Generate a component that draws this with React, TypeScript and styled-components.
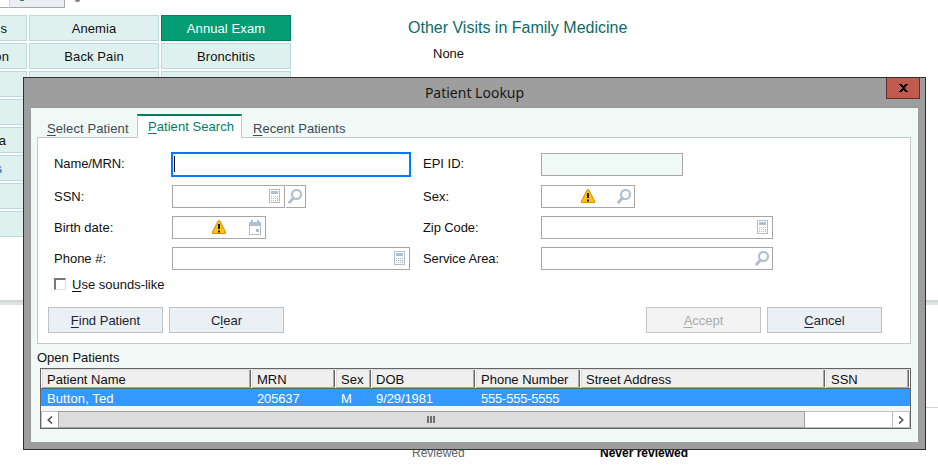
import React from "react";
import styled, { createGlobalStyle } from "styled-components";

const GlobalStyle = createGlobalStyle`
  * { box-sizing: border-box; }
  body {
    margin: 0;
    background: #fff;
    overflow: hidden;
    font: 13px/16px "Liberation Sans", Arial, sans-serif;
    color: #101010;
  }
`;

const Page = styled.div`
  position: relative;
  width: 938px;
  height: 470px;
  overflow: hidden;
  background: #fff;
`;

const Strip = styled.div`
  display: flex;
  align-items: flex-start;
  height: 15px;
`;
const StripInput = styled.div`
  width: 9px;
  height: 8px;
  border-bottom: 1px solid #a8a8a8;
`;
const StripButton = styled.div`
  width: 56px;
  height: 8px;
  padding-left: 10px;
  background: #ebeff3;
  border: solid #a8a8a8;
  border-width: 0 1px 1px 0;
  border-left: 1px solid #d4d8da;
`;
const GreenMark = styled.div`
  width: 4px;
  height: 1px;
  background: #2c8a62;
`;
const Knob = styled.div`
  width: 5px;
  height: 2px;
  margin-left: 10px;
  background: #74859a;
  border-radius: 0 0 2px 2px;
`;

const Upper = styled.div`
  display: flex;
  height: 285px;
`;
const Tiles = styled.div`
  display: grid;
  grid-template-columns: 27px 130px 130px;
  grid-auto-rows: 26px;
  gap: 2px;
  align-content: start;
  width: 291px;
`;
const Tile = styled.div<{ $selected?: boolean; $cut?: number; $blue?: boolean }>`
  display: flex;
  justify-content: ${(p) => (p.$cut === undefined ? "center" : "flex-end")};
  padding: 5px ${(p) => p.$cut ?? 0}px 0 0;
  overflow: hidden;
  border: 1px solid ${(p) => (p.$selected ? "#048060" : "#bcd9dc")};
  border-left-width: ${(p) => (p.$cut === undefined ? 1 : 0)}px;
  background: ${(p) => (p.$selected ? "#059d75" : "#dff1ee")};
  color: ${(p) => (p.$selected ? "#fff" : p.$blue ? "#1560b8" : "#101010")};
  letter-spacing: 0.1px;
`;
const Visits = styled.section`
  margin-left: 117px;
  padding-top: 3px;
`;
const VisitsTitle = styled.h2`
  margin: 0;
  font-weight: 400;
  font-size: 16px;
  line-height: 20px;
  color: #0c6b66;
`;
const VisitsNone = styled.div`
  margin: 8px 0 0 25px;
`;
const Divider = styled.div`
  height: 5px;
  background: #dee3e1;
  border-top: 2px solid #ced7d4;
`;
const Reviews = styled.div`
  display: flex;
  height: 58px;
  margin-top: 102px;
  border-top: 1px solid #d2d2d2;
  margin-left: 412px;
`;
const ReviewCell = styled.div<{ $w: number; $bold?: boolean }>`
  width: ${(p) => p.$w}px;
  height: 50px;
  padding-top: 37px;
  overflow: hidden;
  font-size: 12px;
  color: ${(p) => (p.$bold ? "#000" : "#606468")};
  font-weight: ${(p) => (p.$bold ? 700 : 400)};
`;

const Dialog = styled.div`
  position: absolute;
  left: 23px;
  top: 77px;
  width: 903px;
  height: 373px;
  border: 1px solid #303030;
  background: #9e9e9e;
  padding: 0 7px 7px;
`;
const TitleBar = styled.header`
  display: flex;
  justify-content: space-between;
  align-items: flex-start;
  height: 29px;
  margin-right: -2px;
`;
const Title = styled.h1`
  flex: 1;
  margin: 0;
  padding: 5px 0 0 32px;
  text-align: center;
  font: 400 14px/20px "Noto Sans", "Open Sans", sans-serif;
  color: #181818;
`;
const Close = styled.button`
  display: flex;
  align-items: flex-start;
  justify-content: center;
  width: 34px;
  height: 21px;
  padding: 6px 0 0 1px;
  border: 1px solid #5f2f2b;
  border-top: 0;
  background: #c25a50;
`;
const Client = styled.div`
  height: 335px;
  border-top: 1px solid #9098a4;
  background: #f0f9f6;
  padding: 6px 7px 0 6px;
`;
const Tabs = styled.nav`
  display: flex;
  height: 24px;
  margin-bottom: -1px;
  position: relative;
`;
const Tab = styled.div<{ $active?: boolean; $w: number; $inset: number; $space: number }>`
  width: ${(p) => p.$w}px;
  height: 24px;
  padding: ${(p) => (p.$active ? 3 : 5)}px 0 0 ${(p) => p.$inset}px;
  border-top: 2px solid ${(p) => (p.$active ? "#008060" : "transparent")};
  border-left: 1px solid ${(p) => (p.$active ? "#c6c8c8" : "transparent")};
  border-right: 1px solid ${(p) => (p.$active ? "#c6c8c8" : "transparent")};
  background: ${(p) => (p.$active ? "#fff" : "transparent")};
  color: ${(p) => (p.$active ? "#008060" : "#3e4a58")};
  letter-spacing: ${(p) => p.$space}px;
  white-space: nowrap;
`;
const Panel = styled.div`
  height: 207px;
  padding: 15px 0 0 16px;
  border: 1px solid #c6c8c8;
  background: #fff;
`;
const Form = styled.div`
  display: grid;
  grid-template-columns: 369px 369px;
  grid-template-rows: 32px 31px 31px 23px;
`;
const FormRow = styled.div`
  display: flex;
  height: 23px;
`;
const Label = styled.label<{ $first?: boolean; $space?: number }>`
  width: 118px;
  padding-top: ${(p) => (p.$first ? 3 : 4)}px;
  letter-spacing: ${(p) => p.$space ?? 0}px;
`;
const Field = styled.div<{ $w: number; $readonly?: boolean }>`
  display: flex;
  align-items: flex-start;
  justify-content: flex-end;
  width: ${(p) => p.$w}px;
  height: 23px;
  padding: 3px 3px 0 0;
  border: 1px solid #a6a6a6;
  background: ${(p) => (p.$readonly ? "#eff9f6" : "#fff")};
`;
const FocusedField = styled.div`
  width: 240px;
  height: 25px;
  margin: -1px;
  padding: 2px 0 0 1px;
  border: 2px solid #007bff;
  background: #fff;
`;
const Caret = styled.div`
  width: 1px;
  height: 16px;
  background: #000;
`;
const LookupButton = styled.button`
  width: 20px;
  height: 23px;
  margin-left: 1px;
  padding: 3px 0 0 2px;
  border: 1px solid #a6a6a6;
  border-left: 0;
  background: #fff;
  display: flex;
`;
const IconSlot = styled.span<{ $after: number }>`
  display: flex;
  margin-right: ${(p) => p.$after}px;
`;
const CheckRow = styled.label`
  display: flex;
  gap: 6px;
  height: 16px;
  margin-top: 7px;
`;
const Box = styled.span`
  width: 12px;
  height: 12px;
  margin-top: 1px;
  border: 1px solid #e0e0e0;
  border-top: 2px solid #787878;
  border-left: 2px solid #787878;
  background: #fff;
`;
const Buttons = styled.div`
  display: flex;
  gap: 6px;
  margin: 14px 0 0 -6px;
`;
const Button = styled.button<{ $push?: boolean }>`
  width: 115px;
  height: 26px;
  margin-left: ${(p) => (p.$push ? 356 : 0)}px;
  padding: 2px 0 0;
  border: 1px solid #bcc3c8;
  background: #ebf0f4;
  color: #202430;
  font: inherit;
  &:disabled {
    color: #a9a9a9;
    background: #f3f3f3;
    border-color: #c6c6c6;
  }
`;
const Key = styled.span`
  text-decoration: underline;
  text-decoration-thickness: 1px;
  text-underline-offset: 2px;
`;

const ListTitle = styled.div`
  height: 24px;
  padding-top: 6px;
  color: #101010;
`;
const Table = styled.div`
  width: 871px;
  height: 61px;
  margin-left: 3px;
  border: 1px solid #646464;
  background: #f4f6f7;
`;
const Cols = styled.div<{ $selected?: boolean }>`
  display: grid;
  grid-template-columns: 210px 84px 36px 104px 105px 245px 84px 1px;
  grid-template-rows: 100%;
  height: ${(p) => (p.$selected ? 17 : 20)}px;
  background: ${(p) => (p.$selected ? "#3399ff" : "#fff")};
  border-bottom: ${(p) => (p.$selected ? 0 : 1)}px solid #646464;
  color: ${(p) => (p.$selected ? "#fff" : "#101010")};
`;
const Head = styled.div<{ $pad: number }>`
  margin-left: 1px;
  padding: 0 0 0 ${(p) => p.$pad - 2}px;
  border: solid #dcdcdc;
  border-width: 1px 0 0 1px;
  border-bottom: 1px solid #a8a8a8;
  background: #efefef;
  box-shadow: inset -1px 0 #666, inset -2px 0 #aaa;
  line-height: 19px;
  white-space: nowrap;
`;
const Cell = styled.div<{ $pad: number; $space: number }>`
  padding-left: ${(p) => p.$pad}px;
  line-height: 19px;
  letter-spacing: ${(p) => p.$space}px;
  white-space: nowrap;
`;
const Scroll = styled.div`
  display: flex;
  height: 17px;
  margin-top: 5px;
  border: 1px solid #c2c2c2;
  background: #fff;
`;
const Arrow = styled.div<{ $right?: boolean }>`
  display: flex;
  align-items: center;
  justify-content: center;
  width: 17px;
  padding-right: ${(p) => (p.$right ? 0 : 2)}px;
  border-left: ${(p) => (p.$right ? "1px solid #bdbdbd" : "0")};
`;
const Thumb = styled.div`
  display: flex;
  align-items: center;
  justify-content: center;
  gap: 1px;
  width: 747px;
  height: 17px;
  margin: -1px auto 0 -1px;
  padding-right: 1px;
  border: 1px solid #a0a0a0;
  background: #dcdcdc;
`;
const Grip = styled.span`
  width: 2px;
  height: 7px;
  background: #707070;
`;

const SearchIcon = () => (
  <svg width="14" height="15" viewBox="0 0 14 15">
    <circle cx="8.5" cy="5.5" r="4.5" fill="none" stroke="#b0bfcc" strokeWidth="2.1" />
    <path d="M5.2 9.3L1.6 13.2" stroke="#b0bfcc" strokeWidth="3" strokeLinecap="round" />
  </svg>
);
const CalcIcon = () => (
  <svg width="11" height="14" viewBox="0 0 11 14" shapeRendering="crispEdges">
    <path d="M.5.5h10v13H.5z" fill="#fff" stroke="#b0bfcc" />
    <path d="M2 2h7v3H2z" fill="#b0bfcc" />
    {[7, 9, 11].map((y) =>
      [2, 4, 6, 8].map((x) => <rect key={`${x}-${y}`} x={x} y={y} width="1" height="1" fill="#b4b7bd" />)
    )}
    <path d="M8 9h1v3H8z" fill="#b0bfcc" />
  </svg>
);
const CalendarIcon = () => (
  <svg width="12" height="15" viewBox="0 0 12 15" shapeRendering="crispEdges">
    <path d="M0 2h12v13H0z" fill="#b0bfcc" />
    <path d="M2 0h2v3H2zM8 0h2v3H8z" fill="#b0bfcc" />
    <path d="M1 6h10v8H1z" fill="#fff" />
    <path d="M7 9h3v3H7z" fill="#b0bfcc" />
  </svg>
);
const WarningIcon = () => (
  <svg width="14" height="14" viewBox="0 0 14 14">
    <path d="M6.2.8h1.6L13.5 12v1.5H.5V12z" fill="#ffc20d" stroke="#d18b0c" strokeLinejoin="round" />
    <path d="M6 4h2v5H6zM6 10.5h2v2H6z" fill="#191919" />
  </svg>
);
const CrossIcon = () => (
  <svg width="9" height="8" viewBox="0 0 9 8" shapeRendering="crispEdges">
    <path d="M0 0h3v1h1v1h1V1h1V0h3v1H8v1H7v1H6v2h1v1h1v1h1v1H6V7H5V6H4v1H3v1H0V7h1V6h1V5h1V3H2V2H1V1H0z" fill="#000" />
  </svg>
);
const Chevron = ({ d }: { d: string }) => (
  <svg width="6" height="8" viewBox="0 0 6 8">
    <path d={d} fill="none" stroke="#555" strokeWidth="1.6" />
  </svg>
);

type TileData = { text?: string; cut?: number; selected?: boolean; blue?: boolean };
const tiles: TileData[] = [
  { text: "s", cut: 19 }, { text: "Anemia" }, { text: "Annual Exam", selected: true },
  { text: "on", cut: 17 }, { text: "Back Pain" }, { text: "Bronchitis" },
  { cut: 0 }, {}, {},
  { cut: 0 }, {}, {},
  { text: "a", cut: 20 }, {}, {},
  { text: "s", cut: 24, blue: true }, {}, {},
  { cut: 0 }, {}, {},
  { cut: 0 }, {}, {},
];

const columns = [
  { head: "Patient Name", value: "Button, Ted", pad: 6, space: 0.1 },
  { head: "MRN", value: "205637", pad: 6, space: -0.15 },
  { head: "Sex", value: "M", pad: 6, space: 0 },
  { head: "DOB", value: "9/29/1981", pad: 5, space: -0.1 },
  { head: "Phone Number", value: "555-555-5555", pad: 6, space: -0.22 },
  { head: "Street Address", value: "", pad: 6, space: 0 },
  { head: "SSN", value: "", pad: 6, space: 0 },
];

export default function App() {
  return (
    <Page>
      <GlobalStyle />
      <Strip>
        <StripInput />
        <StripButton><GreenMark /></StripButton>
        <Knob />
      </Strip>
      <Upper>
        <Tiles>
          {tiles.map((t, i) => (
            <Tile key={i} $selected={t.selected} $cut={t.cut} $blue={t.blue}>{t.text}</Tile>
          ))}
        </Tiles>
        <Visits>
          <VisitsTitle>Other Visits in Family Medicine</VisitsTitle>
          <VisitsNone>None</VisitsNone>
        </Visits>
      </Upper>
      <Divider />
      <Reviews>
        <ReviewCell $w={188}>Reviewed</ReviewCell>
        <ReviewCell $w={200} $bold>Never reviewed</ReviewCell>
      </Reviews>

      <Dialog role="dialog">
        <TitleBar>
          <Title>Patient Lookup</Title>
          <Close aria-label="Close"><CrossIcon /></Close>
        </TitleBar>
        <Client>
          <Tabs>
            <Tab $w={100} $inset={9} $space={0.1}><Key>S</Key>elect Patient</Tab>
            <Tab $w={105} $inset={10} $space={0.05} $active><Key>P</Key>atient Search</Tab>
            <Tab $w={120} $inset={10} $space={0.05}><Key>R</Key>ecent Patients</Tab>
          </Tabs>
          <Panel>
            <Form>
              <FormRow><Label $first $space={-0.1}>Name/MRN:</Label><FocusedField><Caret /></FocusedField></FormRow>
              <FormRow><Label $first>EPI ID:</Label><Field $w={142} $readonly /></FormRow>
              <FormRow>
                <Label>SSN:</Label>
                <Field $w={113}><IconSlot $after={1}><CalcIcon /></IconSlot></Field>
                <LookupButton aria-label="Look up"><SearchIcon /></LookupButton>
              </FormRow>
              <FormRow>
                <Label>Sex:</Label>
                <Field $w={94}>
                  <IconSlot $after={22}><WarningIcon /></IconSlot>
                  <IconSlot $after={0}><SearchIcon /></IconSlot>
                </Field>
              </FormRow>
              <FormRow>
                <Label>Birth date:</Label>
                <Field $w={94}>
                  <IconSlot $after={23}><WarningIcon /></IconSlot>
                  <IconSlot $after={1}><CalendarIcon /></IconSlot>
                </Field>
              </FormRow>
              <FormRow>
                <Label $space={-0.1}>Zip Code:</Label>
                <Field $w={232}><IconSlot $after={1}><CalcIcon /></IconSlot></Field>
              </FormRow>
              <FormRow>
                <Label>Phone #:</Label>
                <Field $w={238}><IconSlot $after={1}><CalcIcon /></IconSlot></Field>
              </FormRow>
              <FormRow>
                <Label $space={-0.1}>Service Area:</Label>
                <Field $w={232}><IconSlot $after={0}><SearchIcon /></IconSlot></Field>
              </FormRow>
            </Form>
            <CheckRow><Box /><span><Key>U</Key>se sounds-like</span></CheckRow>
            <Buttons>
              <Button><Key>F</Key>ind Patient</Button>
              <Button>C<Key>l</Key>ear</Button>
              <Button $push disabled><Key>A</Key>ccept</Button>
              <Button><Key>C</Key>ancel</Button>
            </Buttons>
          </Panel>
          <ListTitle>Open Patients</ListTitle>
          <Table>
            <Cols>{columns.map((c) => <Head key={c.head} $pad={c.pad}>{c.head}</Head>)}</Cols>
            <Cols $selected>
              {columns.map((c) => <Cell key={c.head} $pad={c.pad} $space={c.space}>{c.value}</Cell>)}
            </Cols>
            <Scroll>
              <Arrow><Chevron d="M5 .5L1.3 4L5 7.5" /></Arrow>
              <Thumb><Grip /><Grip /><Grip /></Thumb>
              <Arrow $right><Chevron d="M1 .5L4.7 4L1 7.5" /></Arrow>
            </Scroll>
          </Table>
        </Client>
      </Dialog>
    </Page>
  );
}
